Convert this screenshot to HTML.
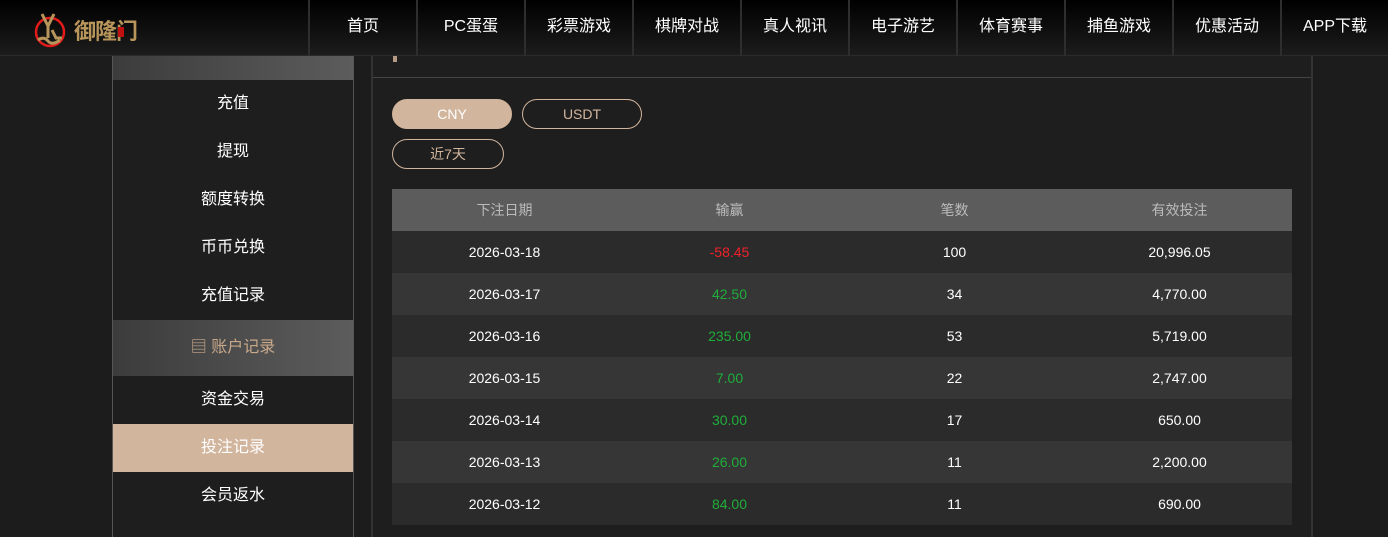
<!DOCTYPE html>
<html><head><meta charset="utf-8"><style>
*{margin:0;padding:0;box-sizing:border-box}
body{width:1388px;height:537px;overflow:hidden;background:#1c1c1c;font-family:"Liberation Sans","Noto Sans CJK SC",sans-serif;position:relative}
.hdr{position:absolute;left:0;top:0;width:1388px;height:56px;background:linear-gradient(#000,#1c1c1c);border-bottom:1px solid #2a2a2a;z-index:5}
.nav{position:absolute;top:0;height:56px;width:108px;border-left:2px solid #2e2e2e;color:#fff;font-size:16px;text-align:center;line-height:54px}
.side{position:absolute;left:112px;top:56px;width:242px;height:481px;border-left:1px solid #555;border-right:1px solid #555;background:#1e1e1e}
.si{height:48px;line-height:48px;text-align:center;color:#fff;font-size:16px}
.main{position:absolute;left:371px;top:56px;width:942px;height:481px;border-left:2px solid #333;border-right:2px solid #333;background:#1e1e1e}
.btn{position:absolute;height:30px;border-radius:15px;border:1px solid #d2b59d;text-align:center;line-height:28px;font-size:14px;color:#d2b59d}
table{position:absolute;left:392px;top:189px;width:900px;border-collapse:collapse;font-size:14px}
td,th{height:42px;text-align:center;width:25%}
th{background:#5c5c5c;color:#bbb;font-weight:normal}
td{color:#fff}
tr:nth-child(even) td{background:#2b2b2b}
tr:nth-child(odd) td{background:#363636}
.r{color:#f0212b!important}.g{color:#1fae3a!important}
</style></head><body>
<div class="hdr">
<svg style="position:absolute;left:34px;top:8px" width="36" height="40" viewBox="0 0 36 40"><circle cx="16" cy="24" r="14" fill="none" stroke="#e31b1b" stroke-width="2.5"/><path d="M8 6 L14 18 L20 6 M14 18 L14 30 M18 22 L22 30 L28 30 M4 32 Q10 28 14 33 T26 32" stroke="#b8955a" stroke-width="3" fill="none"/></svg>
<div style="position:absolute;left:74px;top:14px;color:#b8955a;font-size:22px;font-weight:bold;letter-spacing:-1px">御隆门</div>
<div style="position:absolute;left:118px;top:27px;width:6px;height:10px;background:#c01010"></div>
<div class="nav" style="left:308px">首页</div>
<div class="nav" style="left:416px">PC蛋蛋</div>
<div class="nav" style="left:524px">彩票游戏</div>
<div class="nav" style="left:632px">棋牌对战</div>
<div class="nav" style="left:740px">真人视讯</div>
<div class="nav" style="left:848px">电子游艺</div>
<div class="nav" style="left:956px">体育赛事</div>
<div class="nav" style="left:1064px">捕鱼游戏</div>
<div class="nav" style="left:1172px">优惠活动</div>
<div class="nav" style="left:1280px">APP下载</div>
</div>
<div class="side">
<div style="height:24px;background:linear-gradient(90deg,#3c3c3c,#5c5c5c)"></div>
<div class="si">充值</div><div class="si">提现</div><div class="si">额度转换</div><div class="si">币币兑换</div><div class="si">充值记录</div>
<div class="si" style="height:56px;line-height:56px;background:linear-gradient(90deg,#3c3c3c,#5c5c5c);color:#c9a88a">▤ 账户记录</div>
<div class="si">资金交易</div>
<div class="si" style="background:#d2b59d">投注记录</div>
<div class="si">会员返水</div>
</div>
<div class="main"><div style="height:22px;border-bottom:1px solid #444"></div><div style="position:absolute;left:20px;top:-4px;width:4px;height:10px;background:#b49a84"></div></div>
<div class="btn" style="left:392px;top:99px;width:120px;background:#d2b59d;color:#fff">CNY</div>
<div class="btn" style="left:522px;top:99px;width:120px">USDT</div>
<div class="btn" style="left:392px;top:139px;width:112px">近7天</div>
<table>
<tr><th>下注日期</th><th>输赢</th><th>笔数</th><th>有效投注</th></tr>
<tr><td>2026-03-18</td><td class="r">-58.45</td><td>100</td><td>20,996.05</td></tr>
<tr><td>2026-03-17</td><td class="g">42.50</td><td>34</td><td>4,770.00</td></tr>
<tr><td>2026-03-16</td><td class="g">235.00</td><td>53</td><td>5,719.00</td></tr>
<tr><td>2026-03-15</td><td class="g">7.00</td><td>22</td><td>2,747.00</td></tr>
<tr><td>2026-03-14</td><td class="g">30.00</td><td>17</td><td>650.00</td></tr>
<tr><td>2026-03-13</td><td class="g">26.00</td><td>11</td><td>2,200.00</td></tr>
<tr><td>2026-03-12</td><td class="g">84.00</td><td>11</td><td>690.00</td></tr>
</table>
</body></html>
